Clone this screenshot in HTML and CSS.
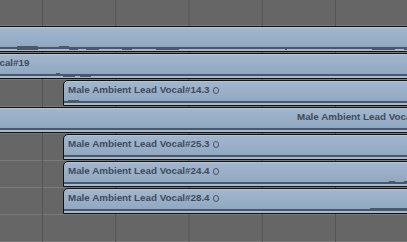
FILE: index.html
```html
<!DOCTYPE html>
<html>
<head>
<meta charset="utf-8">
<link rel="stylesheet" href="styles.css">
</head>
<body>
<div class="arrange">
  <div class="track">
    <div class="region off-left r1">
      <div class="name"></div>
      <svg class="wave" width="440" height="7" viewBox="-19 0 440 7">
        <rect x="-19" y="4" width="440" height="2"/>
        <rect x="17" y="3" width="21" height="1"/>
        <rect x="17" y="6" width="21" height="1"/>
        <rect x="59" y="3" width="10" height="1"/>
        <rect x="69" y="6" width="9" height="1"/>
        <rect x="86" y="6" width="13" height="1"/>
        <rect x="122" y="6" width="10" height="1"/>
        <rect x="156" y="6" width="23" height="1"/>
        <rect x="285" y="6" width="2" height="1"/>
        <rect x="372" y="6" width="23" height="1"/>
        <rect x="404" y="6" width="4" height="1"/>
      </svg>
    </div>
  </div>
  <div class="track">
    <div class="region r2">
      <div class="name">Male Ambient Lead Vocal#19</div>
      <svg class="wave" width="540" height="7" viewBox="-108 0 540 7">
        <rect x="-108" y="4" width="540" height="2"/>
        <rect x="56" y="3" width="4" height="1"/>
        <rect x="63" y="6" width="12" height="1"/>
        <rect x="80" y="6" width="11" height="1"/>
      </svg>
    </div>
  </div>
  <div class="track">
    <div class="region clip">
      <div class="name">Male Ambient Lead Vocal#14.3<span class="loop"></span></div>
      <svg class="wave" width="360" height="7" viewBox="64 0 360 7">
        <rect x="64" y="4" width="360" height="2"/>
        <rect x="68" y="3" width="11" height="1"/>
      </svg>
    </div>
  </div>
  <div class="track">
    <div class="region off-left">
      <div class="name late">Male Ambient Lead Vocal#17</div>
      <svg class="wave" width="440" height="7" viewBox="-19 0 440 7">
        <rect x="-19" y="4" width="440" height="2"/>
      </svg>
    </div>
  </div>
  <div class="track">
    <div class="region clip">
      <div class="name">Male Ambient Lead Vocal#25.3<span class="loop"></span></div>
      <svg class="wave" width="360" height="7" viewBox="64 0 360 7">
        <rect x="64" y="4" width="360" height="2"/>
      </svg>
    </div>
  </div>
  <div class="track">
    <div class="region clip">
      <div class="name">Male Ambient Lead Vocal#24.4<span class="loop"></span></div>
      <svg class="wave" width="360" height="7" viewBox="64 0 360 7">
        <rect x="64" y="4" width="360" height="2"/>
        <rect x="389" y="3" width="6" height="1"/>
        <rect x="404" y="3" width="4" height="1"/>
      </svg>
    </div>
  </div>
  <div class="track">
    <div class="region clip">
      <div class="name">Male Ambient Lead Vocal#28.4<span class="loop"></span></div>
      <svg class="wave" width="360" height="7" viewBox="64 0 360 7">
        <rect x="64" y="4" width="360" height="2"/>
        <rect x="370" y="3" width="40" height="1"/>
      </svg>
    </div>
  </div>
</div>
</body>
</html>
```

FILE: styles.css
```css
html, body {
  margin: 0;
  padding: 0;
  width: 407px;
  height: 242px;
  overflow: hidden;
  background: #666666;
}

.arrange {
  width: 407px;
  height: 242px;
  overflow: hidden;
  box-sizing: border-box;
  padding-top: 26px;
  display: flex;
  flex-direction: column;
  gap: 1px;
  background-color: #666666;
  background-image:
    linear-gradient(90deg, #555555 1px, transparent 1px),
    linear-gradient(#7a7a7a 1px, transparent 1px);
  background-size: 73.25px 100%, 100% 27px;
  background-position: 42px 0, 0 25px;
  font-family: "Liberation Sans", Arial, sans-serif;
}

.track {
  height: 26px;
  display: flex;
}

.region {
  flex: 1;
  height: 26px;
  box-sizing: border-box;
  border: 1px solid #101214;
  margin-right: -12px;
  display: flex;
  flex-direction: column;
  overflow: hidden;
  background: linear-gradient(#a2b7ce 0, #93aac3 18px, #8ea5bf 20px, #a6b9cd 21px, #a6b9cd 100%);
  box-shadow: inset 0 1px 0 rgba(255, 255, 255, 0.18);
}

.off-left {
  margin-left: -20px;
}

.r2 {
  margin-left: -109px;
}

.clip {
  margin-left: 63px;
  border-top-left-radius: 5px;
}

.name {
  height: 12px;
  padding: 3px 0 0 4px;
  font-size: 9.8px;
  line-height: 12px;
  font-weight: bold;
  color: #3f4a5b;
  white-space: nowrap;
  flex: none;
}

.name.late {
  padding-left: 316px;
}

.loop {
  display: inline-block;
  width: 4.8px;
  height: 4.8px;
  border: 1.3px solid #4a5564;
  border-radius: 50%;
  margin-left: 3px;
  vertical-align: -0.5px;
}

.wave {
  display: block;
  flex: none;
  margin-top: 1px;
  fill: #4b586a;
}
```
